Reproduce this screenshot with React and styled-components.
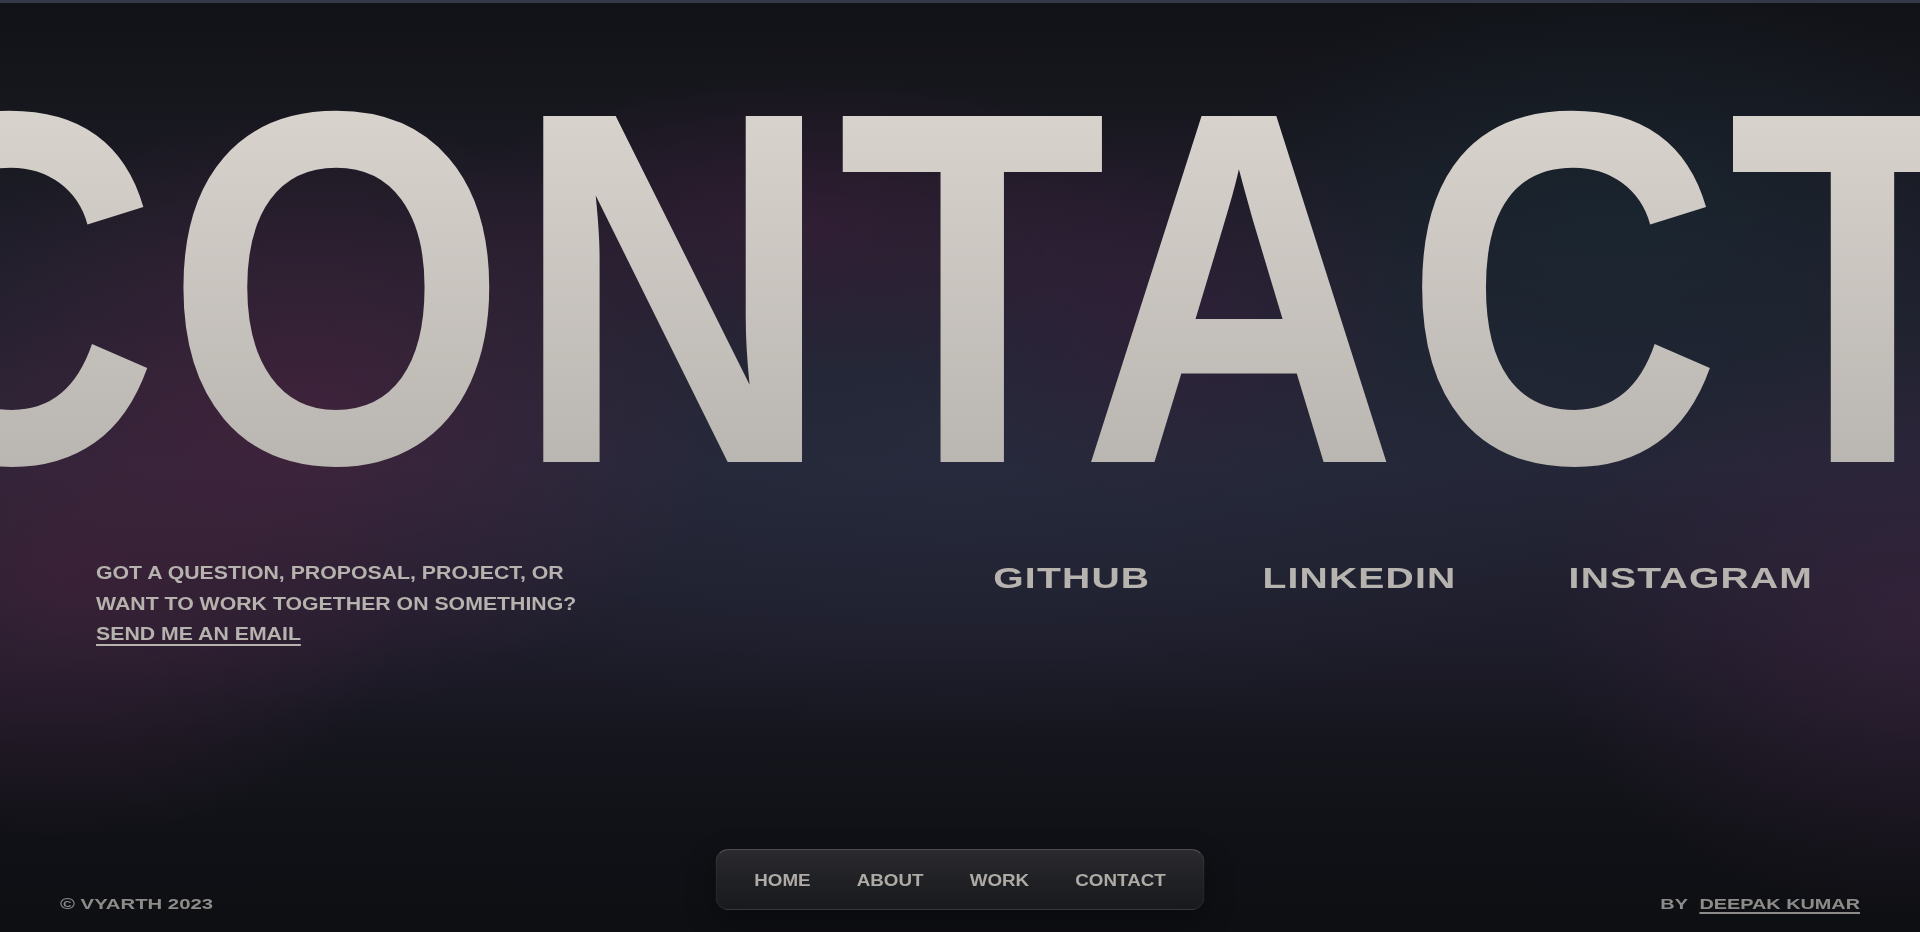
import React from "react";
import styled, { createGlobalStyle } from "styled-components";

const GlobalStyle = createGlobalStyle`
  html, body {
    margin: 0;
    padding: 0;
    background: #0f1014;
  }
  body {
    font-family: "Liberation Sans", Arial, sans-serif;
    overflow: hidden;
  }
  * { box-sizing: border-box; }
`;

const Page = styled.div`
  position: relative;
  height: 100vh;
  min-height: 932px;
  display: flex;
  flex-direction: column;
  overflow: hidden;
  border-top: 3px solid #353947;
  background:
    radial-gradient(ellipse 420px 300px at 16% 44%, rgba(74, 34, 62, 0.7), rgba(74, 34, 62, 0) 100%),
    radial-gradient(ellipse 360px 260px at 3% 62%, rgba(66, 34, 58, 0.65), rgba(66, 34, 58, 0) 100%),
    radial-gradient(ellipse 380px 150px at 42% 24%, rgba(64, 30, 60, 0.55), rgba(64, 30, 60, 0) 100%),
    radial-gradient(ellipse 260px 200px at 60% 33%, rgba(58, 28, 60, 0.5), rgba(58, 28, 60, 0) 100%),
    radial-gradient(ellipse 420px 260px at 84% 24%, rgba(24, 44, 54, 0.55), rgba(24, 44, 54, 0) 100%),
    radial-gradient(ellipse 380px 300px at 100% 66%, rgba(62, 36, 64, 0.6), rgba(62, 36, 64, 0) 100%),
    radial-gradient(ellipse 700px 280px at 50% 48%, rgba(40, 46, 64, 0.55), rgba(40, 46, 64, 0) 100%),
    linear-gradient(180deg, #111217 0%, #16161d 10%, #1f1f2b 28%, #242637 50%, #1e1d2b 68%, #15151d 80%, #101116 90%, #0e0f13 100%);
`;

const TitleRow = styled.div`
  display: flex;
  justify-content: center;
  margin-top: 34px;
`;

const Title = styled.h1`
  flex: none;
  margin: 0;
  font-family: "Liberation Sans", Arial, sans-serif;
  font-weight: 700;
  font-size: 503px;
  line-height: 1;
  height: 503px;
  letter-spacing: 7px;
  white-space: nowrap;
  color: transparent;
  background: linear-gradient(180deg, #dcd7d1 0%, #d8d3cd 14%, #b9b5b0 86%, #b4b0ab 100%);
  -webkit-background-clip: text;
  background-clip: text;
  transform: translateX(-38px) scaleX(0.875);
`;

const Content = styled.section`
  display: flex;
  justify-content: space-between;
  align-items: flex-start;
  margin-top: 18px;
  padding: 0 107px 0 96px;
`;

const Blurb = styled.p`
  margin: 0;
  font-size: 18.5px;
  line-height: 30.5px;
  font-weight: 700;
  color: #b6b2ad;
  white-space: nowrap;
  transform: scaleX(1.15);
  transform-origin: left top;
`;

const EmailLink = styled.a`
  color: inherit;
  text-decoration: underline;
  text-decoration-thickness: 2px;
  text-underline-offset: 4px;
`;

const Socials = styled.nav`
  display: flex;
  gap: 84px;
  margin-top: 2px;
  transform: scaleX(1.335);
  transform-origin: right top;
`;

const Social = styled.a`
  font-size: 29.3px;
  line-height: 1.2;
  font-weight: 700;
  letter-spacing: 0.03em;
  color: #b7b3ae;
  text-decoration: none;
`;

const Footer = styled.footer`
  margin-top: auto;
  display: flex;
  justify-content: space-between;
  align-items: center;
  padding: 0 60px 18px;
  font-size: 15.5px;
  line-height: 20px;
  font-weight: 700;
  color: #8e8c8a;
`;

const Copyright = styled.div`
  transform: scaleX(1.31);
  transform-origin: left center;
`;

const Credit = styled.div`
  display: flex;
  gap: 9px;
  transform: scaleX(1.28);
  transform-origin: right center;
`;

const CreditLink = styled.a`
  color: inherit;
  text-decoration: underline;
  text-decoration-thickness: 1.5px;
  text-underline-offset: 3px;
`;

const NavBar = styled.nav`
  position: absolute;
  left: 50%;
  bottom: 22px;
  transform: translateX(-50%);
  width: 489px;
  height: 61px;
  display: flex;
  align-items: center;
  justify-content: center;
  border-radius: 13px;
  background: linear-gradient(180deg, #2a2a2f 0%, #202125 50%, #18191d 100%);
  border: 1px solid rgba(255, 255, 255, 0.07);
  border-top-color: rgba(255, 255, 255, 0.22);
  box-shadow: 0 10px 28px rgba(0, 0, 0, 0.35);
`;

const NavList = styled.ul`
  list-style: none;
  margin: 0;
  padding: 0;
  display: flex;
  gap: 40.4px;
  transform: scaleX(1.14);
`;

const NavItem = styled.a`
  display: block;
  font-size: 16.5px;
  line-height: 20px;
  font-weight: 700;
  color: #aeaaa6;
  text-decoration: none;
`;

const navLinks = ["HOME", "ABOUT", "WORK", "CONTACT"];
const socials = ["GITHUB", "LINKEDIN", "INSTAGRAM"];

export default function App() {
  return (
    <>
      <GlobalStyle />
      <Page>
        <TitleRow>
          <Title>CONTACT</Title>
        </TitleRow>
        <Content>
          <Blurb>
            GOT A QUESTION, PROPOSAL, PROJECT, OR
            <br />
            WANT TO WORK TOGETHER ON SOMETHING?
            <br />
            <EmailLink href="#">SEND ME AN EMAIL</EmailLink>
          </Blurb>
          <Socials>
            {socials.map((s) => (
              <Social key={s} href="#">
                {s}
              </Social>
            ))}
          </Socials>
        </Content>
        <Footer>
          <Copyright>© VYARTH 2023</Copyright>
          <Credit>
            <span>BY</span>
            <CreditLink href="#">DEEPAK KUMAR</CreditLink>
          </Credit>
        </Footer>
        <NavBar>
          <NavList>
            {navLinks.map((n) => (
              <li key={n}>
                <NavItem href="#">{n}</NavItem>
              </li>
            ))}
          </NavList>
        </NavBar>
      </Page>
    </>
  );
}
